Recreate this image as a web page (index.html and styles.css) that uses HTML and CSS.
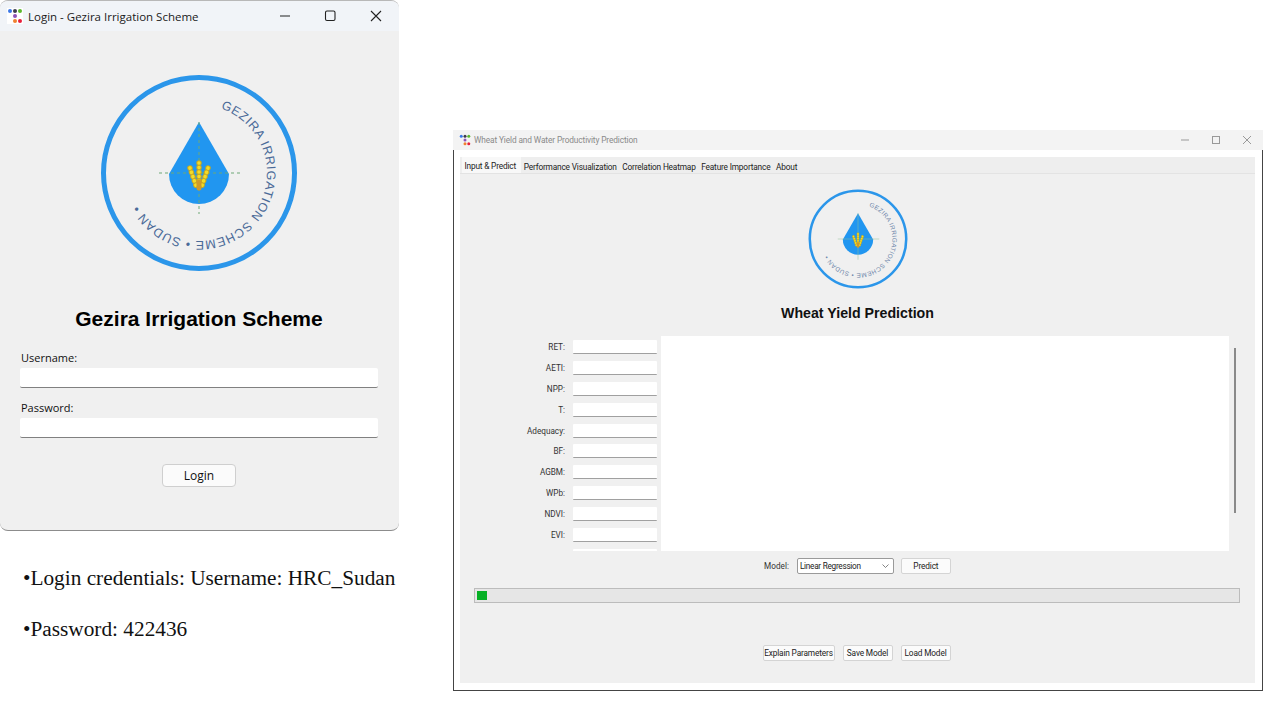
FILE: index.html
```html
<!DOCTYPE html>
<html lang="en">
  <head>
    <meta charset="UTF-8" />
    <title>Gezira Irrigation Scheme</title>
    <link rel="stylesheet" href="styles.css">
  </head>
  <body>
    <div class="left_col">
      <div class="login_window">
        <div class="login_titlebar">
          <svg class="app_icon" width="16" height="16" viewBox="0 0 16 16">
            <rect width="16" height="16" fill="#fff" />
            <circle cx="3" cy="3" r="2" fill="#3b78e7" />
            <circle cx="8" cy="3" r="2" fill="#3c3c4c" />
            <circle cx="13" cy="3" r="2" fill="#5cb82e" />
            <circle cx="8" cy="8" r="2" fill="#8e52b8" />
            <circle cx="8" cy="13" r="2" fill="#f08030" />
            <circle cx="13" cy="13" r="2" fill="#e8203c" />
          </svg>
          <span class="login_title">Login - Gezira Irrigation Scheme</span>
          <svg class="win_controls" width="111" height="12" viewBox="0 0 111 12" fill="none" stroke="#222" stroke-width="1.1">
            <path d="M0 6H10" />
            <rect x="45.5" y="1" width="9.5" height="9.5" rx="1.5" />
            <path d="M91 1L101 11M101 1L91 11" />
          </svg>
        </div>
        <div class="login_body">
          <svg class="logo" width="198" height="198" viewBox="0 0 198 198">
            <circle cx="99" cy="99" r="95.5" fill="none" stroke="#2b96ea" stroke-width="5" />
            <path id="ring1" d="M99 31A68 68 0 1 1 98.9 31" fill="none" />
            <text class="logo_text"><textPath href="#ring1" startOffset="22">GEZIRA IRRIGATION SCHEME • SUDAN •</textPath></text>
            <path d="M99 48L69 100A30 30 0 0 0 129 100Z" fill="#2196f0" />
            <path d="M59 99H141M99 48V140" stroke="#6fa877" stroke-width="1" stroke-dasharray="3 3" fill="none" />
            <path class="wheat_base" d="M99 89V114M90 94L96.5 113M108 94L101.5 113" />
            <path class="wheat_top" d="M99 89V114M90 94L96.5 113M108 94L101.5 113" />
            <path d="M99 108V114" stroke="#cf9a2a" stroke-width="5" stroke-linecap="round" fill="none" />
          </svg>
          <h1 class="login_heading">Gezira Irrigation Scheme</h1>
          <form class="login_form">
            <label class="login_label">Username:</label>
            <input class="login_input" type="text" />
            <label class="login_label login_label_second">Password:</label>
            <input class="login_input" type="text" />
            <button class="login_btn" type="button">Login</button>
          </form>
        </div>
      </div>
      <div class="notes">
        <p>•Login credentials: Username: HRC_Sudan</p>
        <p>•Password: 422436</p>
      </div>
    </div>

    <div class="app_window">
      <div class="app_titlebar">
        <svg class="app_icon_small" width="12" height="12" viewBox="0 0 16 16">
          <circle cx="3" cy="3" r="2" fill="#3b78e7" />
          <circle cx="8" cy="3" r="2" fill="#3c3c4c" />
          <circle cx="13" cy="3" r="2" fill="#5cb82e" />
          <circle cx="8" cy="8" r="2" fill="#8e52b8" />
          <circle cx="8" cy="13" r="2" fill="#f08030" />
          <circle cx="13" cy="13" r="2" fill="#e8203c" />
        </svg>
        <span class="app_title">Wheat Yield and Water Productivity Prediction</span>
        <svg class="app_controls" width="70" height="10" viewBox="0 0 70 10" fill="none" stroke="#999" stroke-width="1">
          <path d="M0 5H8" />
          <rect x="31.5" y="1.5" width="7" height="7" />
          <path d="M62 1L70 9M70 1L62 9" />
        </svg>
      </div>
      <div class="app_frame">
        <div class="panel">
          <div class="tabs">
            <span class="tab tab_active">Input &amp; Predict</span>
            <span class="tab">Performance Visualization</span>
            <span class="tab">Correlation Heatmap</span>
            <span class="tab">Feature Importance</span>
            <span class="tab">About</span>
          </div>
          <svg class="logo_small" width="100" height="100" viewBox="0 0 198 198">
            <circle cx="99" cy="99" r="95.5" fill="none" stroke="#2b96ea" stroke-width="5" />
            <path id="ring2" d="M99 31A68 68 0 1 1 98.9 31" fill="none" />
            <text class="logo_text logo_text_small"><textPath href="#ring2" startOffset="22">GEZIRA IRRIGATION SCHEME • SUDAN •</textPath></text>
            <path d="M99 48L69 100A30 30 0 0 0 129 100Z" fill="#2196f0" />
            <path d="M59 99H141M99 48V140" stroke="#8fbf9a" stroke-width="1" fill="none" />
            <path class="wheat_base" d="M99 89V114M90 94L96.5 113M108 94L101.5 113" />
            <path class="wheat_top" d="M99 89V114M90 94L96.5 113M108 94L101.5 113" />
            <path d="M99 108V114" stroke="#cf9a2a" stroke-width="5" stroke-linecap="round" fill="none" />
          </svg>
          <h2 class="app_heading">Wheat Yield Prediction</h2>

          <div class="work_area">
            <div class="fields">
              <div class="field"><label>RET:</label><input type="text" /></div>
              <div class="field"><label>AETI:</label><input type="text" /></div>
              <div class="field"><label>NPP:</label><input type="text" /></div>
              <div class="field"><label>T:</label><input type="text" /></div>
              <div class="field"><label>Adequacy:</label><input type="text" /></div>
              <div class="field"><label>BF:</label><input type="text" /></div>
              <div class="field"><label>AGBM:</label><input type="text" /></div>
              <div class="field"><label>WPb:</label><input type="text" /></div>
              <div class="field"><label>NDVI:</label><input type="text" /></div>
              <div class="field"><label>EVI:</label><input type="text" /></div>
              <div class="field"><label></label><input type="text" /></div>
            </div>
            <div class="output_box"></div>
            <div class="scroll_thumb"></div>
          </div>

          <div class="model_row">
            <span class="model_label">Model:</span>
            <div class="combo">
              <span>Linear Regression</span>
              <svg width="7" height="4" viewBox="0 0 7 4" fill="none" stroke="#666" stroke-width="0.8"><path d="M0.5 0.5L3.5 3.5L6.5 0.5" /></svg>
            </div>
            <button class="small_btn predict_btn" type="button">Predict</button>
          </div>

          <div class="progress"><div class="progress_chunk"></div></div>

          <div class="bottom_row">
            <button class="small_btn explain_btn" type="button">Explain Parameters</button>
            <button class="small_btn predict_btn" type="button">Save Model</button>
            <button class="small_btn predict_btn" type="button">Load Model</button>
          </div>
        </div>
      </div>
    </div>
  </body>
</html>
```

FILE: styles.css
```css
*,
*::before,
*::after {
  box-sizing: border-box;
}
html {
  margin: 0;
  padding: 0;
}
body {
  margin: 0;
  width: 1280px;
  height: 720px;
  overflow: hidden;
  display: flex;
  align-items: flex-start;
  background: #fff;
  font-family: "Open Sans", "Noto Sans", sans-serif;
}
input,
button {
  font-family: inherit;
  margin: 0;
}

/* login window */
.left_col {
  width: 399px;
  flex: none;
}
.login_window {
  height: 531px;
  display: flex;
  flex-direction: column;
  background: #f0f0f0;
  border-radius: 8px;
  border-top: 1px solid #b8b8b8;
  border-bottom: 1px solid #8c8c8c;
  overflow: hidden;
}
.login_titlebar {
  height: 30px;
  flex: none;
  display: flex;
  align-items: center;
  padding-left: 7px;
  background: #f1f4f8;
}
.login_title {
  margin-left: 5px;
  font-size: 11.5px;
  color: #1a1a1a;
}
.win_controls {
  margin-left: auto;
  margin-right: 8px;
}
.login_body {
  flex: 1;
  display: flex;
  flex-direction: column;
  align-items: center;
  padding-right: 1px;
}
.logo {
  margin-top: 43px;
  display: block;
}
.logo_text {
  font-family: "Liberation Sans", sans-serif;
  font-size: 12.5px;
  letter-spacing: 0.7px;
  fill: #4a6a98;
}
.logo_text_small {
  fill: #6f87aa;
}
.wheat_base,
.wheat_top {
  fill: none;
  stroke-linecap: round;
  stroke-dasharray: 0.1 4.4;
}
.wheat_base {
  stroke: #c9a820;
  stroke-width: 5.5;
}
.wheat_top {
  stroke: #f2dc28;
  stroke-width: 3.5;
}
.login_heading {
  margin: 34px 0 0;
  font-family: "Liberation Sans", sans-serif;
  font-size: 21px;
  line-height: 26px;
  font-weight: bold;
  color: #000;
}
.login_form {
  width: 100%;
  padding: 0 20px;
  display: flex;
  flex-direction: column;
}
.login_label {
  margin: 18px 0 2px 1px;
  font-size: 11px;
  line-height: 16px;
  color: #111;
}
.login_label_second {
  margin-top: 12px;
}
.login_input {
  height: 20px;
  border: 0;
  border-bottom: 1px solid #808080;
  border-radius: 2px;
  background: #fff;
}
.login_btn {
  align-self: center;
  width: 74px;
  height: 23px;
  margin-top: 26px;
  border: 1px solid #cfcfcf;
  border-radius: 4px;
  background: #fbfbfb;
  font-size: 12px;
  color: #111;
  padding: 0;
}

.notes {
  padding-left: 23px;
  margin-top: 35px;
  font-family: "Liberation Serif", serif;
  font-size: 21.3px;
  line-height: 24px;
  color: #111;
}
.notes p {
  margin: 0 0 27px;
  white-space: nowrap;
}

/* main window */
.app_window {
  width: 810px;
  height: 561px;
  margin: 130px 0 0 54px;
  flex: none;
  display: flex;
  flex-direction: column;
  font-family: Roboto, "Open Sans", sans-serif;
}
.app_titlebar {
  height: 20px;
  flex: none;
  display: flex;
  align-items: center;
  padding-left: 6px;
  background: #f3f3f3;
}
.app_icon_small {
  display: block;
}
.app_title {
  margin-left: 3px;
  font-size: 8.3px;
  letter-spacing: -0.11px;
  color: #8a8a8a;
}
.app_controls {
  margin-left: auto;
  margin-right: 12px;
}
.app_frame {
  flex: 1;
  padding: 7px 7px 7px 6px;
  background: #fff;
  border: 1px solid #444;
  border-top: 0;
}
.panel {
  height: 100%;
  display: flex;
  flex-direction: column;
  align-items: center;
  background: #f0f0f0;
}
.tabs {
  width: 100%;
  height: 17px;
  flex: none;
  display: flex;
  align-items: flex-end;
  padding-left: 2px;
  background: #eeeeee;
  border-bottom: 1px solid #e3e3e3;
}
.tab {
  height: 15px;
  padding: 0 2.8px;
  font-size: 8.3px;
  letter-spacing: -0.18px;
  line-height: 19px;
  color: #222;
  white-space: nowrap;
}
.tab_active {
  height: 16px;
  padding: 0 5px 0 2.5px;
  line-height: 18px;
  background: #f8f8f8;
}
.logo_small {
  display: block;
  flex: none;
  margin-top: 15px;
}
.app_heading {
  margin: 15px 0 0;
  font-family: "Liberation Sans", sans-serif;
  font-size: 14.2px;
  line-height: 18px;
  font-weight: bold;
  color: #111;
}
.work_area {
  width: 100%;
  height: 215px;
  margin-top: 14px;
  flex: none;
  display: flex;
  align-items: flex-start;
}
.fields {
  width: 197px;
  height: 215px;
  flex: none;
  padding-top: 4px;
  overflow: hidden;
  display: flex;
  flex-direction: column;
  gap: 6.9px;
}
.field {
  height: 14px;
  flex: none;
  display: flex;
  justify-content: flex-end;
  align-items: center;
  gap: 8px;
}
.field label {
  font-size: 8.2px;
  color: #333;
}
.field input {
  width: 84px;
  height: 14px;
  border: 0;
  border-bottom: 1px solid #a0a0a0;
  border-radius: 1px;
  background: #fff;
}
.output_box {
  width: 568px;
  height: 215px;
  margin-left: 4px;
  flex: none;
  background: #fff;
}
.scroll_thumb {
  width: 2px;
  height: 165px;
  margin: 12px 0 0 5px;
  background: #8a8a8a;
}
.model_row {
  margin-top: 7px;
  height: 16px;
  flex: none;
  display: flex;
  align-items: center;
}
.model_label {
  font-size: 8.2px;
  color: #333;
  margin-right: 8px;
}
.combo {
  width: 97px;
  height: 16px;
  display: flex;
  align-items: center;
  justify-content: space-between;
  padding: 0 4px 0 2px;
  border: 1px solid #9a9a9a;
  border-radius: 2px;
  background: #fff;
  font-size: 8.2px;
  letter-spacing: -0.25px;
  color: #222;
  margin-right: 7px;
}
.small_btn {
  height: 16px;
  padding: 0;
  border: 1px solid #d4d4d4;
  border-radius: 2px;
  background: #fbfbfb;
  font-size: 8.3px;
  letter-spacing: -0.15px;
  color: #222;
  white-space: nowrap;
}
.predict_btn {
  width: 50px;
}
.explain_btn {
  width: 72px;
}
.progress {
  width: 766px;
  height: 15px;
  margin: 14px 2px 0 0;
  flex: none;
  padding: 2px;
  background: #e6e6e6;
  border: 1px solid #bcbcbc;
}
.progress_chunk {
  width: 10px;
  height: 100%;
  background: #06b025;
}
.bottom_row {
  margin: 42px 2px 0 0;
  display: flex;
  gap: 8px;
}
```
